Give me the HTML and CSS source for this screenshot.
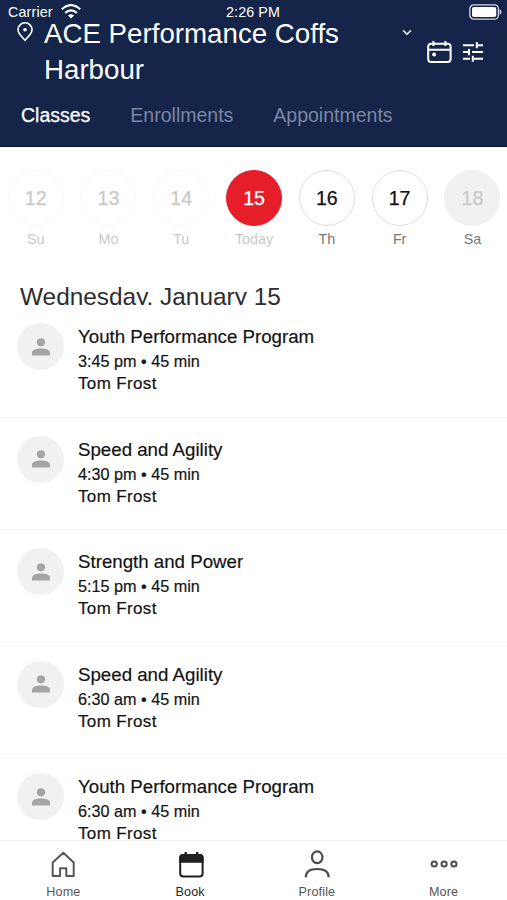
FILE: index.html
```html
<!DOCTYPE html>
<html lang="en">
<head>
<meta charset="utf-8">
<title>Book a class</title>
<link rel="stylesheet" href="styles.css">
</head>
<body>
<div class="app">
  <header class="header">
    <div class="status">
      <div class="carrier"><span>Carrier</span>
        <svg width="20" height="15" viewBox="0 0 20 15" fill="none" stroke="#fff" stroke-width="2.2"><path d="M.8 5.2Q10-3 19.2 5.2M4.1 9Q10 3.7 15.9 9"/><path d="M7 11.6Q10 9 13 11.6L10 14.6Z" fill="#fff" stroke="none"/></svg>
      </div>
      <span class="clock">2:26 PM</span>
      <svg class="battery" width="33" height="16" viewBox="0 0 33 16"><rect x=".8" y=".8" width="28.6" height="14.4" rx="4" fill="none" stroke="#d5d9e3" stroke-width="1.3"/><rect x="3" y="3" width="24.2" height="10" rx="1.8" fill="#fff"/><path d="M30.7 5.2Q32.5 6 32.5 8T30.7 10.8Z" fill="#d5d9e3"/></svg>
    </div>
    <div class="location">
      <svg class="pin" width="16" height="20" viewBox="0 0 16 20" fill="none" stroke="#fff" stroke-width="1.6"><path d="M8 18.3C5.5 15.5 1 11.9 1 7.8a7 7 0 0 1 14 0C15 11.9 10.5 15.5 8 18.3Z"/><circle cx="8" cy="7.8" r="1.8" fill="#fff" stroke="none"/></svg>
      <h1 class="place">ACE Performance Coffs<br>Harbour</h1>
      <svg class="chevron" width="10" height="7" viewBox="0 0 10 7" fill="none" stroke="#fff" stroke-width="1.5"><path d="M1 1.2 5 5.2 9 1.2"/></svg>
      <svg class="calendar" width="25" height="23" viewBox="0 0 25 23" fill="none" stroke="#fff" stroke-width="2"><rect x="1.2" y="2.8" width="22.4" height="18.2" rx="3"/><path d="M1.2 8.8H23.6M6.4 0V5M18.4 0V5"/><circle cx="7.1" cy="13.5" r="2" fill="#fff" stroke="none"/></svg>
      <svg class="filter" width="20" height="20" viewBox="0 0 20 20" fill="none" stroke="#fff" stroke-width="2"><path d="M0 3.2H11M13.8 3.2H20M13.8 .1V6.2M0 10.1H6M6 7V13.2M9 10.1H20M0 16.7H7M9.8 16.7H20M9.8 13.7V19.8"/></svg>
    </div>
    <nav class="tabs"><span class="tab active">Classes</span><span class="tab">Enrollments</span><span class="tab">Appointments</span></nav>
  </header>
  <section class="week">
    <div class="day past"><b>12</b><span>Su</span></div>
    <div class="day past"><b>13</b><span>Mo</span></div>
    <div class="day past"><b>14</b><span>Tu</span></div>
    <div class="day today"><b>15</b><span>Today</span></div>
    <div class="day"><b>16</b><span>Th</span></div>
    <div class="day"><b>17</b><span>Fr</span></div>
    <div class="day closed"><b>18</b><span>Sa</span></div>
  </section>
  <h2 class="date">Wednesday, January 15</h2>
  <main class="list">
    <article class="item"><div class="avatar"><svg width="18" height="18" viewBox="0 0 18 18" fill="#a5a5a5"><circle cx="9" cy="4.3" r="4.1"/><path d="M0 17.5V15C0 12 4 10.6 9 10.6S18 12 18 15V17.5Z"/></svg></div><div class="info"><h3>Youth Performance Program</h3><p class="time">3:45 pm • 45 min</p><p class="coach">Tom Frost</p></div></article>
    <article class="item"><div class="avatar"><svg width="18" height="18" viewBox="0 0 18 18" fill="#a5a5a5"><circle cx="9" cy="4.3" r="4.1"/><path d="M0 17.5V15C0 12 4 10.6 9 10.6S18 12 18 15V17.5Z"/></svg></div><div class="info"><h3>Speed and Agility</h3><p class="time">4:30 pm • 45 min</p><p class="coach">Tom Frost</p></div></article>
    <article class="item"><div class="avatar"><svg width="18" height="18" viewBox="0 0 18 18" fill="#a5a5a5"><circle cx="9" cy="4.3" r="4.1"/><path d="M0 17.5V15C0 12 4 10.6 9 10.6S18 12 18 15V17.5Z"/></svg></div><div class="info"><h3>Strength and Power</h3><p class="time">5:15 pm • 45 min</p><p class="coach">Tom Frost</p></div></article>
    <article class="item"><div class="avatar"><svg width="18" height="18" viewBox="0 0 18 18" fill="#a5a5a5"><circle cx="9" cy="4.3" r="4.1"/><path d="M0 17.5V15C0 12 4 10.6 9 10.6S18 12 18 15V17.5Z"/></svg></div><div class="info"><h3>Speed and Agility</h3><p class="time">6:30 am • 45 min</p><p class="coach">Tom Frost</p></div></article>
    <article class="item"><div class="avatar"><svg width="18" height="18" viewBox="0 0 18 18" fill="#a5a5a5"><circle cx="9" cy="4.3" r="4.1"/><path d="M0 17.5V15C0 12 4 10.6 9 10.6S18 12 18 15V17.5Z"/></svg></div><div class="info"><h3>Youth Performance Program</h3><p class="time">6:30 am • 45 min</p><p class="coach">Tom Frost</p></div></article>
  </main>
  <nav class="bottom">
    <div class="link"><svg width="28" height="30" viewBox="0 0 28 30" fill="none" stroke="#55555a" stroke-width="2"><path d="M3.7 12.6 14.3 2.8 24.7 12.6V26H17.3V18.2H11.1V26H3.7Z" stroke-linejoin="round"/></svg><span>Home</span></div>
    <div class="link current"><svg width="28" height="30" viewBox="0 0 28 30" fill="none" stroke="#1f1f22" stroke-width="2"><rect x="4.2" y="5" width="22.4" height="21.6" rx="3"/><path d="M4.2 11.8V8Q4.2 5 7.2 5H23.6Q26.6 5 26.6 8V11.8Z" fill="#1f1f22"/><path d="M9.7 2V6M21.2 2V6" stroke-width="2.4"/></svg><span>Book</span></div>
    <div class="link"><svg width="28" height="30" viewBox="0 0 28 30" fill="none" stroke="#4b4b50" stroke-width="2.2"><ellipse cx="14.2" cy="7.3" rx="5.3" ry="5.9"/><path d="M2.8 27.2C2.8 21.3 7.7 19 14.2 19S25.6 21.3 25.6 27.2"/></svg><span>Profile</span></div>
    <div class="link"><svg width="28" height="30" viewBox="0 0 28 30" fill="none" stroke="#4b4b50" stroke-width="2"><circle cx="4.2" cy="14" r="2.6"/><circle cx="14.1" cy="14" r="2.6"/><circle cx="23.9" cy="14" r="2.6"/></svg><span>More</span></div>
  </nav>
</div>
</body>
</html>
```
FILE: styles.css
```css
* { box-sizing: border-box; margin: 0; padding: 0; }
body { font-family: "Liberation Sans", Arial, sans-serif; background: #fff; color: #141414; }
svg { display: block; flex: none; }
.app { width: 507px; height: 900px; overflow: hidden; display: flex; flex-direction: column; background: #fff; }

.header { flex: none; height: 147px; background: #142549; color: #fff; border-bottom: 1px solid #0b1735; }
.status { display: grid; grid-template-columns: 1fr auto 1fr; height: 20px; padding: 4px 5px 0 8px; font-size: 14.3px; line-height: 16px; }
.carrier { display: flex; gap: 8px; }
.carrier span { letter-spacing: .15px; }
.clock { letter-spacing: .1px; margin: 0 3px 0 -1px; }
.battery { justify-self: end; }
.location { display: flex; align-items: flex-start; height: 74px; padding-left: 17px; }
.pin { margin-top: 2px; }
.place { width: 358px; margin: -4px 0 0 11px; font-size: 27.7px; font-weight: 400; line-height: 36px; white-space: nowrap; }
.chevron { margin-top: 9px; }
.calendar { margin: 21px 0 0 15px; }
.filter { margin: 22px 0 0 11px; }
.tabs { display: flex; gap: 40px; padding: 9px 0 0 21px; font-size: 19.5px; line-height: 24px; }
.tab { color: #7b86a3; }
.active { color: #fff; -webkit-text-stroke: .25px; }

.week { flex: none; display: grid; grid-template-columns: repeat(7, 72.8px); height: 135px; padding-top: 23px; margin-right: -3px; }
.day { display: flex; flex-direction: column; align-items: center; color: #777; font-size: 14.3px; padding-right: 1.5px; }
.day b { width: 56px; height: 56px; border: 1px solid #dedede; border-radius: 50%; color: #111; font-size: 19.6px; font-weight: 400; line-height: 54px; text-align: center; -webkit-text-stroke: .25px; }
.day span { margin-top: 4px; line-height: 18px; }
.past, .today { color: #c9c9c9; }
.past b { border-color: #f9f9f9; color: #c9c9c9; }
.today b { background: #e61e29; border-color: #e61e29; color: #fff; }
.closed b { background: #f1f1f1; border-color: #f1f1f1; color: #c9c9c9; }

.date { flex: none; height: 23px; margin-left: 20px; overflow: hidden; font-size: 24.4px; font-weight: 400; line-height: 29px; color: #2d2d30; }
.list { flex: 1; min-height: 0; overflow: hidden; }
.item { display: flex; height: 112.5px; padding: 18px 17px 0; border-bottom: 1px solid #f5f5f5; }
.avatar { display: flex; align-items: center; justify-content: center; width: 47px; height: 47px; border-radius: 50%; background: #f1f1f1; }
.info { margin: 1px 0 0 14px; -webkit-text-stroke: .2px; }
.item h3 { font-size: 18.7px; font-weight: 400; line-height: 26px; }
.time { font-size: 16.2px; line-height: 22px; }
.coach { font-size: 17px; line-height: 23px; letter-spacing: .35px; }

.bottom { flex: none; display: grid; grid-template-columns: repeat(4, 1fr); height: 60px; padding-top: 9px; border-top: 1px solid #f1f1f1; background: #fff; }
.link { display: flex; flex-direction: column; align-items: center; color: #55555a; font-size: 12.6px; }
.link span { line-height: 16px; margin-top: 4px; letter-spacing: .15px; }
.current { color: #1f1f22; }
```
